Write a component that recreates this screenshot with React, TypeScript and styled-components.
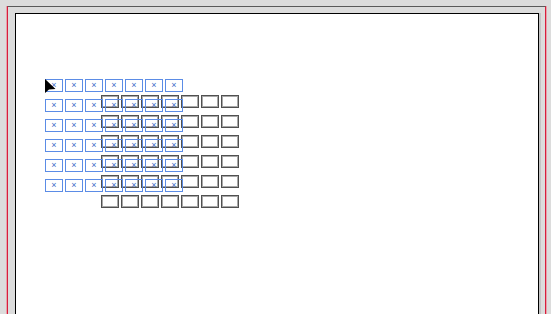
import React from 'react';
import styled, { createGlobalStyle } from 'styled-components';

const GlobalStyle = createGlobalStyle`
	html, body {
		margin: 0;
		padding: 0;
		height: 100%;
		overflow: hidden;
		background: #dcdcdc;
		font-family: "Liberation Sans", Arial, sans-serif;
	}
`;

const BLUE_ROWS = 6;
const GRAY_ROWS = 6;
const COLS = 7;

const Frame = styled.div`
	margin: 6px 0 0 7px;
	width: 524px;
	height: 301px;
	border-top: 1px solid #5a5a5a;
	border-left: 1px solid #d81e3c;
	border-right: 1px solid #d81e3c;
	box-shadow: -1px 0 0 #e8a0aa, 1px 0 0 #e8a0aa;
	padding: 6px 6px 0 7px;
	box-sizing: content-box;
`;

const Page = styled.div`
	height: 301px;
	background: #ffffff;
	border: 1px solid #000000;
	border-bottom: none;
	box-shadow: 2px 0 0 #c4c4c4;
	padding: 65px 0 0 29px;
	box-sizing: border-box;
`;

const Stage = styled.div`
	position: relative;
	width: 240px;
	height: 140px;
`;

const Grid = styled.div<{ $dx?: number; $dy?: number; $front?: boolean }>`
	position: absolute;
	left: ${p => p.$dx ?? 0}px;
	top: ${p => p.$dy ?? 0}px;
	z-index: ${p => (p.$front ? 2 : 1)};
	display: grid;
	grid-template-columns: repeat(${COLS}, 18px);
	grid-auto-rows: 13px;
	column-gap: 2px;
	row-gap: 7px;
`;

const BlueCell = styled.div`
	box-sizing: border-box;
	border: 1px solid #5b8ce6;
	display: flex;
	align-items: center;
	justify-content: center;
	color: #3d6cc8;
	font-size: 9px;
	line-height: 1;
`;

const GrayCell = styled.div`
	box-sizing: border-box;
	border: 1px solid #505050;
	box-shadow: inset 0 0 0 1px #a8a8a8;
`;

const Cursor = styled.svg`
	position: absolute;
	left: 0;
	top: 0;
	z-index: 3;
	width: 11px;
	height: 15px;
`;

export default function App() {
	return (
		<>
			<GlobalStyle />
			<Frame>
				<Page>
					<Stage>
						<Grid $dx={56} $dy={16}>
							{Array.from({ length: GRAY_ROWS * COLS }).map((_, i) => (
								<GrayCell key={`g-${i}`} />
							))}
						</Grid>
						<Grid $front>
							{Array.from({ length: BLUE_ROWS * COLS }).map((_, i) => (
								<BlueCell key={`b-${i}`}>×</BlueCell>
							))}
						</Grid>
						<Cursor viewBox="0 0 11 15">
							<path d="M0 0 L0 14 L4 10.5 L10.5 10 Z" fill="#000" />
						</Cursor>
					</Stage>
				</Page>
			</Frame>
		</>
	);
}
